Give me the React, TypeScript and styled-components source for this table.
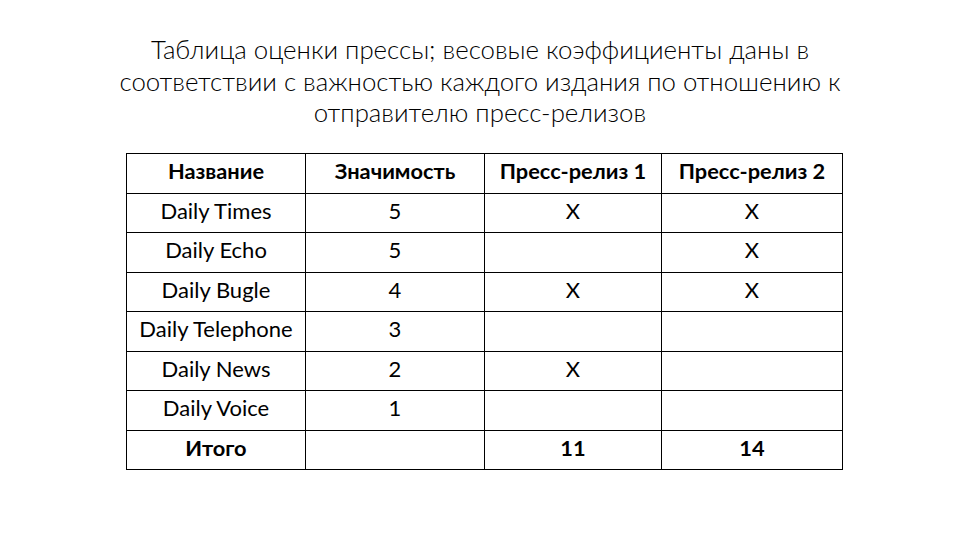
import { createGlobalStyle } from "styled-components";
import styled from "styled-components";

const GlobalStyle = createGlobalStyle`
  html, body {
    margin: 0;
    padding: 0;
    background: #ffffff;
  }
  body {
    font-family: Lato, "Open Sans", sans-serif;
    color: #000000;
  }
`;

const Slide = styled.div`
  width: 960px;
  height: 540px;
  display: flex;
  flex-direction: column;
  align-items: center;
  padding-top: 34px;
  box-sizing: border-box;
`;

const Title = styled.h1`
  margin: 0;
  text-align: center;
  font-family: Lato, sans-serif;
  font-weight: 300;
  font-size: 25.8px;
  line-height: 31.5px;
  color: #000000;
  white-space: nowrap;
`;

const Table = styled.table`
  margin-top: 24.5px;
  margin-left: 9px;
  border-collapse: collapse;
  table-layout: fixed;
  width: 716px;
`;

const Cell = styled.td<{ $bold?: boolean }>`
  border: 1.5px solid #000000;
  height: 39.5px;
  padding: 0 0 5px 0;
  box-sizing: border-box;
  text-align: center;
  vertical-align: middle;
  font-size: ${(p) => (p.$bold ? "21.8px" : "22px")};
  font-weight: ${(p) => (p.$bold ? 700 : 400)};
  white-space: nowrap;
`;

const Col = styled.col<{ $w: number }>`
  width: ${(p) => p.$w}px;
`;

const rows: [string, string, string, string][] = [
  ["Daily Times", "5", "X", "X"],
  ["Daily Echo", "5", "", "X"],
  ["Daily Bugle", "4", "X", "X"],
  ["Daily Telephone", "3", "", ""],
  ["Daily News", "2", "X", ""],
  ["Daily Voice", "1", "", ""],
];

export default function App() {
  return (
    <>
      <GlobalStyle />
      <Slide>
        <Title>
          Таблица оценки прессы; весовые коэффициенты даны в
          <br />
          соответствии с важностью каждого издания по отношению к
          <br />
          отправителю пресс-релизов
        </Title>
        <Table>
          <colgroup>
            <Col $w={179} />
            <Col $w={179} />
            <Col $w={177} />
            <Col $w={181} />
          </colgroup>
          <tbody>
            <tr>
              <Cell $bold>Название</Cell>
              <Cell $bold>Значимость</Cell>
              <Cell $bold>Пресс-релиз 1</Cell>
              <Cell $bold>Пресс-релиз 2</Cell>
            </tr>
            {rows.map((r) => (
              <tr key={r[0]}>
                {r.map((v, i) => (
                  <Cell key={i}>{v}</Cell>
                ))}
              </tr>
            ))}
            <tr>
              <Cell $bold>Итого</Cell>
              <Cell />
              <Cell $bold>11</Cell>
              <Cell $bold>14</Cell>
            </tr>
          </tbody>
        </Table>
      </Slide>
    </>
  );
}
